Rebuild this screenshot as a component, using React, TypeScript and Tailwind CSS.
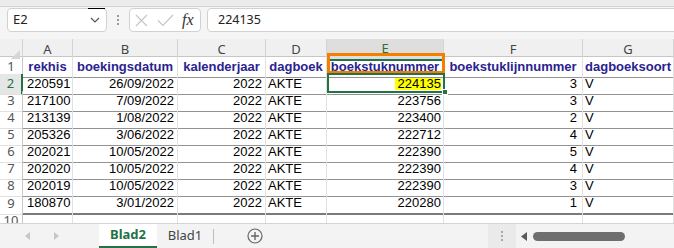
import React from 'react';

const rows = [
  ['220591', '26/09/2022', '2022', 'AKTE', '224135', '3', 'V'],
  ['217100', '7/09/2022', '2022', 'AKTE', '223756', '3', 'V'],
  ['213139', '1/08/2022', '2022', 'AKTE', '223400', '2', 'V'],
  ['205326', '3/06/2022', '2022', 'AKTE', '222712', '4', 'V'],
  ['202021', '10/05/2022', '2022', 'AKTE', '222390', '5', 'V'],
  ['202020', '10/05/2022', '2022', 'AKTE', '222390', '4', 'V'],
  ['202019', '10/05/2022', '2022', 'AKTE', '222390', '3', 'V'],
  ['180870', '3/01/2022', '2022', 'AKTE', '220280', '1', 'V'],
];

const headers = ['rekhis', 'boekingsdatum', 'kalenderjaar', 'dagboek', 'boekstuknummer', 'boekstuklijnnummer', 'dagboeksoort'];
const letters = ['A', 'B', 'C', 'D', 'E', 'F', 'G'];

// alignment + padding per column for data cells
const align = [
  'justify-start pl-[4px]',
  'justify-end pr-[3px]',
  'justify-end pr-[3px]',
  'justify-start pl-[2px]',
  'justify-end pr-[2px]',
  'justify-end pr-[5px]',
  'justify-start pl-[2px]',
];

const gridCols = 'grid grid-cols-[23px_50px_105px_88px_61px_117px_139px_1fr]';
const ui = { fontFamily: '"Noto Sans", "Open Sans", sans-serif' };
const cellFont = { fontFamily: '"Liberation Sans", Arial, sans-serif' };

const App = () => {
  return (
    <div className="w-[674px] h-[248px] overflow-hidden bg-white flex flex-col" style={ui}>
      {/* ribbon edge */}
      <div className="h-[7px] bg-[#ececec] border-b border-[#d4d4d4]" />

      {/* formula bar */}
      <div className="h-[32px] bg-[#f5f5f5] flex items-start pt-[1px] pl-[7px]">
        <div className="relative w-[100px] h-[24px] bg-white border border-[#d1d1d1] rounded-[4px] flex items-center justify-between pl-[5px] pr-[5px]">
          <span className="text-[13px] text-[#222]">E2</span>
          <svg width="10" height="6" viewBox="0 0 10 6" className="mr-[1px]">
            <path d="M1 1 L5 5 L9 1" fill="none" stroke="#555" strokeWidth="1.2" />
          </svg>
          <div className="absolute top-[-1px] right-[1px] w-[17px] h-[1px] bg-black" />
        </div>
        <div className="w-[22px] h-[24px] flex flex-col items-center justify-center gap-[2px]">
          <div className="w-[2px] h-[2px] bg-[#9a9a9a]" />
          <div className="w-[2px] h-[2px] bg-[#9a9a9a]" />
          <div className="w-[2px] h-[2px] bg-[#9a9a9a]" />
        </div>
        <div className="w-[72px] h-[24px] bg-white border border-[#d1d1d1] rounded-[4px] flex items-center pl-[5px] gap-[9px]">
          <svg width="13" height="13" viewBox="0 0 13 13">
            <path d="M1 1 L12 12 M12 1 L1 12" stroke="#c4c4c4" strokeWidth="1.1" fill="none" />
          </svg>
          <svg width="17" height="13" viewBox="0 0 17 13">
            <path d="M1 6.5 L6 11.5 L16 1" stroke="#c4c4c4" strokeWidth="1.1" fill="none" />
          </svg>
          <span className="text-[16px] italic text-[#333] leading-none -ml-[1px]" style={{ fontFamily: '"Liberation Serif", "DejaVu Serif", serif' }}>
            fx
          </span>
        </div>
        <div className="ml-[6px] flex-1 -mr-[8px] h-[24px] bg-white border border-[#d1d1d1] rounded-[4px] flex items-center pl-[10px]">
          <span className="text-[12.5px] text-[#222]">224135</span>
        </div>
      </div>

      {/* sheet grid */}
      <div className="relative flex-1 overflow-hidden">
        {/* column letters */}
        <div className={`${gridCols} h-[18px] bg-[#f0f0f0] border-b border-[#c6c6c6]`}>
          <div className="border-r border-[#d4d4d4] flex items-end justify-end pr-[2px] pb-[2px]">
            <svg width="9" height="9" viewBox="0 0 9 9">
              <path d="M9 0 L9 9 L0 9 Z" fill="#d6d6d6" />
            </svg>
          </div>
          {letters.map((l) => (
            <div
              key={l}
              className={`flex items-center justify-center text-[13px] border-r border-[#d4d4d4] ${
                l === 'E' ? 'bg-[#dedede] text-[#217346] border-b-2 border-b-[#217346]' : 'text-[#444]'
              }`}
            >
              {l}
            </div>
          ))}
        </div>

        {/* header row */}
        <div className={`${gridCols} h-[17px]`}>
          <div className="flex items-center justify-center text-[13px] text-[#555] border-r border-[#c6c6c6] border-b border-b-[#e1e1e1]">1</div>
          {headers.map((h) => (
            <div
              key={h}
              className="flex items-center justify-center overflow-hidden whitespace-nowrap text-[13px] font-bold text-[#2a2290] border-r border-r-[#e1e1e1] border-b border-b-[#939393]"
              style={cellFont}
            >
              {h}
            </div>
          ))}
        </div>

        {/* data rows */}
        {rows.map((r, i) => (
          <div key={i} className={`${gridCols} ${i === rows.length - 1 ? 'h-[18px]' : 'h-[17px]'}`}>
            <div
              className={`flex items-center justify-center text-[13px] border-b border-b-[#e1e1e1] ${
                i === 0 ? 'text-[#217346] bg-[#e6e6e6] border-r-2 border-r-[#217346]' : 'text-[#555] border-r border-r-[#c6c6c6]'
              }`}
            >
              {i + 2}
            </div>
            {r.map((v, j) => (
              <div
                key={j}
                className={`flex items-center whitespace-nowrap text-[13px] text-black border-r border-r-[#e1e1e1] ${
                  i === rows.length - 1 ? 'border-b-2 border-b-[#7a7a7a]' : 'border-b border-b-[#939393]'
                } ${align[j]}`}
                style={cellFont}
              >
                {i === 0 && j === 4 ? (
                  <span className="bg-[#ffff00] pl-[3px] leading-[12px]">{v}</span>
                ) : (
                  v
                )}
              </div>
            ))}
          </div>
        ))}

        {/* row 10, cut off */}
        <div className={`${gridCols} h-[13px] overflow-hidden border-b border-[#d4d4d4]`}>
          <div className="border-r border-[#c6c6c6] overflow-hidden">
            <div className="h-[19px] flex items-center justify-center text-[13px] text-[#555]">10</div>
          </div>
          {letters.map((l) => (
            <div key={l} className="border-r border-[#e1e1e1]" />
          ))}
        </div>

        {/* selection overlays */}
        <div className="absolute left-[327px] top-[14px] w-[118px] h-[21px] border-[3px] border-[#f57d00]" />
        <div className="absolute left-[327px] top-[34px] w-[118px] h-[20px] border-2 border-[#217346]" />
        <div className="absolute left-[442px] top-[50px] w-[6px] h-[6px] bg-[#217346] border border-white" />
      </div>

      {/* sheet tabs */}
      <div className="h-[24px] bg-[#f3f3f3] flex items-center">
        <div className="w-[99px] flex items-center pl-[25px] gap-[24px]">
          <svg width="5" height="8" viewBox="0 0 5 8">
            <path d="M5 0 L0 4 L5 8 Z" fill="#c6c6c6" />
          </svg>
          <svg width="5" height="8" viewBox="0 0 5 8">
            <path d="M0 0 L5 4 L0 8 Z" fill="#c6c6c6" />
          </svg>
        </div>
        <div className="w-[58px] h-full bg-white border-b-2 border-[#217346] flex items-center justify-center text-[13px] font-bold text-[#217346]">
          Blad2
        </div>
        <div className="w-[56px] h-full flex items-center justify-center text-[13px] text-[#444]">Blad1</div>
        <div className="w-[1px] h-[15px] bg-[#bdbdbd]" />
        <div className="w-[82px] flex justify-center">
          <svg width="16" height="16" viewBox="0 0 16 16">
            <circle cx="8" cy="8" r="7" fill="none" stroke="#666" strokeWidth="1.2" />
            <path d="M8 4 V12 M4 8 H12" stroke="#666" strokeWidth="1.4" />
          </svg>
        </div>
        <div className="flex-1" />
        <div className="w-[28px] h-full bg-[#eaeaea] flex flex-col items-center justify-center gap-[2px] ml-[-1px]">
          <div className="w-[2px] h-[2px] bg-[#a8a8a8]" />
          <div className="w-[2px] h-[2px] bg-[#a8a8a8]" />
          <div className="w-[2px] h-[2px] bg-[#a8a8a8]" />
        </div>
        <div className="w-[158px] h-full flex items-center pl-[5px]">
          <svg width="6" height="9" viewBox="0 0 6 9">
            <path d="M6 0 L0 4.5 L6 9 Z" fill="#5a5a5a" />
          </svg>
          <div className="ml-[6px] w-[92px] h-[9px] rounded-full bg-[#6e6e6e]" />
        </div>
      </div>
    </div>
  );
};

export default App;
